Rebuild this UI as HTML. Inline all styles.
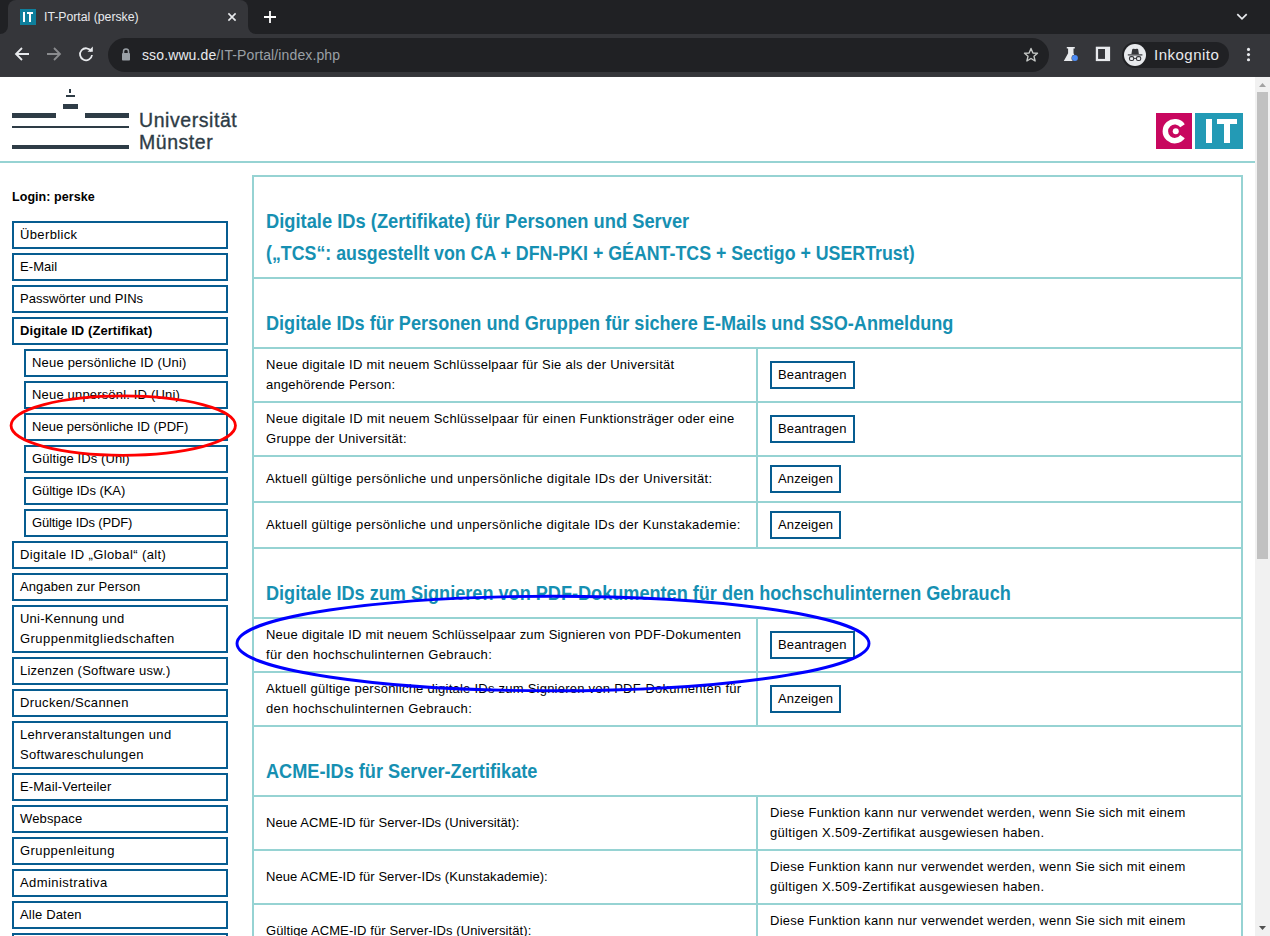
<!DOCTYPE html>
<html><head><meta charset="utf-8">
<style>
html,body{margin:0;padding:0;}
body{width:1270px;height:936px;overflow:hidden;position:relative;background:#fff;font-family:"Liberation Sans",sans-serif;}
.a{position:absolute;}
/* chrome */
#strip{left:0;top:0;width:1270px;height:34px;background:#202124;}
#tab{left:8px;top:0;width:240px;height:34px;background:#35363a;border-radius:8px 8px 0 0;}
#tb{left:0;top:34px;width:1270px;height:42px;background:#35363a;}
#tbline{left:0;top:76px;width:1270px;height:1px;background:#38393d;}
#omni{left:108px;top:38px;width:941px;height:34px;background:#202124;border-radius:17px;}
.ct{color:#e8eaed;white-space:nowrap;}
/* page */
#page{left:0;top:77px;width:1255px;height:859px;background:#fff;overflow:hidden;}
.nav{position:absolute;border:2px solid #065c90;padding:2px 0 2px 6px;box-sizing:border-box;font-size:13px;line-height:20px;color:#000;white-space:nowrap;}

.h{position:absolute;left:266px;font-size:20.6px;line-height:32px;font-weight:bold;color:#1690b2;white-space:nowrap;transform-origin:0 0;}
.hl{position:absolute;background:#96d3d3;}
.t{position:absolute;font-size:13px;line-height:20px;color:#000;white-space:nowrap;}
.btn{position:absolute;left:770px;height:28px;border:2px solid #065c90;box-sizing:border-box;font-size:13px;line-height:24px;padding:0 6px;color:#000;white-space:nowrap;}
</style></head>
<body>
<div class="a" id="strip"></div>
<div class="a" id="tab"></div>
<div class="a" id="tb"></div>
<div class="a" id="tbline"></div>
<div class="a" id="omni"></div>

<!-- tab contents -->
<div class="a" style="left:0;top:26px;width:8px;height:8px;background:#35363a"></div>
<div class="a" style="left:0;top:0;width:8px;height:34px;background:#202124;border-radius:0 0 8px 0"></div>
<div class="a" style="left:248px;top:26px;width:8px;height:8px;background:#35363a"></div>
<div class="a" style="left:248px;top:0;width:8px;height:34px;background:#202124;border-radius:0 0 0 8px"></div>
<div class="a" style="left:20px;top:9px;width:16px;height:16px;background:#0e7f9c"></div>
<div class="a" style="left:23px;top:12px;width:2px;height:10px;background:#fff"></div><div class="a" style="left:27px;top:12px;width:6px;height:2px;background:#fff"></div><div class="a" style="left:29px;top:12px;width:2px;height:10px;background:#fff"></div>
<div class="a ct" style="left:44px;top:8.8px;font-size:12.3px;line-height:17px;letter-spacing:-0.02px">IT-Portal (perske)</div>
<svg class="a" style="left:226px;top:11px" width="12" height="12" viewBox="0 0 12 12"><path d="M2.4 2.4L9.6 9.6M9.6 2.4L2.4 9.6" stroke="#e8eaed" stroke-width="1.6"/></svg>
<svg class="a" style="left:262px;top:9px" width="16" height="16" viewBox="0 0 16 16"><path d="M8 2V14M2 8H14" stroke="#fff" stroke-width="1.8"/></svg>
<svg class="a" style="left:1235px;top:10px" width="14" height="12" viewBox="0 0 14 12"><path d="M2.3 4.2L7 8.9L11.7 4.2" fill="none" stroke="#e8eaed" stroke-width="1.7"/></svg>
<!-- toolbar icons -->
<svg class="a" style="left:13px;top:45px" width="18" height="18" viewBox="0 0 18 18"><path d="M16 9H3M9 3L3 9L9 15" fill="none" stroke="#e8eaed" stroke-width="1.8"/></svg>
<svg class="a" style="left:45px;top:45px" width="18" height="18" viewBox="0 0 18 18"><path d="M2 9H15M9 3L15 9L9 15" fill="none" stroke="#8a8b8e" stroke-width="1.8"/></svg>
<svg class="a" style="left:77px;top:45px" width="18" height="18" viewBox="0 0 18 18"><path d="M14.2 6.2A6 6 0 1 0 15 10" fill="none" stroke="#e8eaed" stroke-width="1.8"/><path d="M10.5 6.8H15.8V1.5Z" fill="#e8eaed"/></svg>
<svg class="a" style="left:120px;top:47px" width="12" height="15" viewBox="0 0 12 15"><path d="M3.5 6V4.5A2.5 2.5 0 0 1 8.5 4.5V6" fill="none" stroke="#9aa0a6" stroke-width="1.5"/><rect x="2" y="6" width="8" height="7.5" fill="#9aa0a6" rx="0.8"/></svg>
<div class="a ct" style="left:142px;top:46px;font-size:14px;line-height:17px;letter-spacing:0.12px;top:46.7px"><span style="color:#e8eaed">sso.wwu.de</span><span style="color:#9aa0a6">/IT-Portal/index.php</span></div>
<svg class="a" style="left:1023px;top:47px" width="16" height="16" viewBox="0 0 16 16"><path d="M8 1.5L9.9 6L14.5 6.3L11 9.3L12.1 14L8 11.5L3.9 14L5 9.3L1.5 6.3L6.1 6Z" fill="none" stroke="#c4c7c5" stroke-width="1.4" stroke-linejoin="round"/></svg>
<svg class="a" style="left:1062px;top:46px" width="18" height="18" viewBox="0 0 18 18"><path d="M4.8 1.1H12.8V2.6H11.5V7.2L15.2 14.9H1.8L6.1 7.2V2.6H4.8Z" fill="#e8eaed"/><circle cx="12.9" cy="12.1" r="3.4" fill="#35363a"/><circle cx="12.9" cy="12.1" r="3" fill="#4c8bf5"/></svg>
<svg class="a" style="left:1095px;top:46px" width="16" height="16" viewBox="0 0 16 16"><rect x="0.8" y="0.7" width="14.3" height="14.4" fill="#e8eaed"/><rect x="3.1" y="3" width="6.9" height="9.9" fill="#35363a"/></svg>
<div class="a" style="left:1122px;top:42px;width:107px;height:26px;border-radius:13px;background:#202124"></div>
<div class="a" style="left:1124px;top:44px;width:22px;height:22px;border-radius:11px;background:#e8eaed"></div>
<svg class="a" style="left:1124px;top:44px" width="22" height="22" viewBox="0 0 22 22"><path d="M7.4 10.2L8.2 5.6Q8.4 4.5 9.5 4.7L11.2 5.1L12.9 4.7Q14 4.5 14.2 5.6L14.9 10.2Z" fill="#35363a"/><rect x="3.8" y="10.3" width="14.6" height="1.2" fill="#35363a"/><rect x="5.5" y="12.6" width="4.2" height="3.9" rx="1.5" fill="none" stroke="#35363a" stroke-width="1.1"/><rect x="12.5" y="12.6" width="4.2" height="3.9" rx="1.5" fill="none" stroke="#35363a" stroke-width="1.1"/><path d="M9.7 14.4H12.5" stroke="#35363a" stroke-width="1"/></svg>
<div class="a ct" style="left:1154px;top:46px;font-size:15px;line-height:17px;letter-spacing:0.5px">Inkognito</div>
<svg class="a" style="left:1244px;top:46px" width="9" height="18" viewBox="0 0 9 18"><circle cx="4.5" cy="3.4" r="1.55" fill="#e8eaed"/><circle cx="4.5" cy="8.6" r="1.55" fill="#e8eaed"/><circle cx="4.5" cy="13.7" r="1.55" fill="#e8eaed"/></svg>


<!-- SCROLLBAR -->
<div class="a" style="left:1255px;top:77px;width:15px;height:859px;background:#f1f1f1"></div>
<div class="a" style="left:1257px;top:92px;width:11px;height:467px;background:#c1c1c1"></div>

<!-- LOGO -->
<div class="a" style="left:12px;top:113px;width:44px;height:5px;background:#2e3c46"></div>
<div class="a" style="left:85px;top:113px;width:44px;height:5px;background:#2e3c46"></div>
<div class="a" style="left:12px;top:126px;width:117px;height:2px;background:#2e3c46"></div>
<div class="a" style="left:12px;top:145px;width:117px;height:4px;background:#2e3c46"></div>
<div class="a" style="left:63px;top:104px;width:15px;height:5px;background:#2e3c46"></div>
<div class="a" style="left:66px;top:95px;width:9px;height:2px;background:#2e3c46"></div>
<div class="a" style="left:69px;top:89px;width:2px;height:4px;background:#2e3c46"></div>

<!-- teal header line -->
<div class="a" style="left:0;top:161px;width:1255px;height:2px;background:#96d3d3"></div>


<svg class="a" style="left:1255px;top:77px" width="15" height="15" viewBox="0 0 15 15"><path d="M4 10H11L7.5 6Z" fill="#a3a3a3"/></svg>
<svg class="a" style="left:1255px;top:921px" width="15" height="15" viewBox="0 0 15 15"><path d="M4 5H11L7.5 9Z" fill="#505050"/></svg>
<div class="a" style="left:139px;top:109.4px;font-size:19.5px;line-height:22px;color:#2e3c46;-webkit-text-stroke:0.35px #2e3c46;white-space:nowrap;letter-spacing:0.561px">Universität</div>
<div class="a" style="left:139px;top:131.1px;font-size:19.5px;line-height:22px;color:#2e3c46;-webkit-text-stroke:0.35px #2e3c46;white-space:nowrap;letter-spacing:0.542px">Münster</div>
<div class="a" style="left:1156px;top:113px;width:36px;height:36px;background:#c8075f"></div>
<div class="a" style="left:1195px;top:113px;width:48px;height:36px;background:#239ab5"></div>
<svg class="a" style="left:1156px;top:113px" width="36" height="36" viewBox="0 0 36 36"><path d="M26.54 12.78A9.45 9.45 0 1 0 26.54 23.62" fill="none" stroke="#fff" stroke-width="5.5"/><circle cx="19.75" cy="18.2" r="3" fill="#fff"/></svg>
<div class="a" style="left:1206px;top:119.3px;width:5.7px;height:23.7px;background:#fff"></div>
<div class="a" style="left:1217px;top:119.3px;width:20px;height:4.4px;background:#fff"></div>
<div class="a" style="left:1224px;top:119.3px;width:5.9px;height:23.7px;background:#fff"></div>
<div class="a" style="left:12px;top:186.8px;font-size:12.5px;line-height:20px;font-weight:bold;color:#000;white-space:nowrap;letter-spacing:0.058px">Login: perske</div>
<div class="nav" style="left:12px;top:221px;width:216px;height:28px"><span style="letter-spacing:0.365px">Überblick</span></div>
<div class="nav" style="left:12px;top:253px;width:216px;height:28px"><span style="letter-spacing:0.071px">E-Mail</span></div>
<div class="nav" style="left:12px;top:285px;width:216px;height:28px"><span style="letter-spacing:0.055px">Passwörter und PINs</span></div>
<div class="nav" style="left:12px;top:317px;width:216px;height:28px;font-weight:bold"><span style="letter-spacing:0.069px">Digitale ID (Zertifikat)</span></div>
<div class="nav" style="left:24px;top:349px;width:204px;height:28px"><span style="letter-spacing:0.199px">Neue persönliche ID (Uni)</span></div>
<div class="nav" style="left:24px;top:381px;width:204px;height:28px"><span style="letter-spacing:0.176px">Neue unpersönl. ID (Uni)</span></div>
<div class="nav" style="left:24px;top:413px;width:204px;height:28px"><span style="letter-spacing:0.011px">Neue persönliche ID (PDF)</span></div>
<div class="nav" style="left:24px;top:445px;width:204px;height:28px"><span style="letter-spacing:0.097px">Gültige IDs (Uni)</span></div>
<div class="nav" style="left:24px;top:477px;width:204px;height:28px"><span style="letter-spacing:-0.039px">Gültige IDs (KA)</span></div>
<div class="nav" style="left:24px;top:509px;width:204px;height:28px"><span style="letter-spacing:-0.140px">Gültige IDs (PDF)</span></div>
<div class="nav" style="left:12px;top:541px;width:216px;height:28px"><span style="letter-spacing:0.405px">Digitale ID „Global“ (alt)</span></div>
<div class="nav" style="left:12px;top:573px;width:216px;height:28px"><span style="letter-spacing:0.100px">Angaben zur Person</span></div>
<div class="nav" style="left:12px;top:605px;width:216px;height:48px"><span style="letter-spacing:0.210px">Uni-Kennung und</span><br><span style="letter-spacing:0.445px">Gruppenmitgliedschaften</span></div>
<div class="nav" style="left:12px;top:657px;width:216px;height:28px"><span style="letter-spacing:0.217px">Lizenzen (Software usw.)</span></div>
<div class="nav" style="left:12px;top:689px;width:216px;height:28px"><span style="letter-spacing:0.364px">Drucken/Scannen</span></div>
<div class="nav" style="left:12px;top:721px;width:216px;height:48px"><span style="letter-spacing:0.332px">Lehrveranstaltungen und</span><br><span style="letter-spacing:0.331px">Softwareschulungen</span></div>
<div class="nav" style="left:12px;top:773px;width:216px;height:28px"><span style="letter-spacing:0.165px">E-Mail-Verteiler</span></div>
<div class="nav" style="left:12px;top:805px;width:216px;height:28px"><span style="letter-spacing:0.135px">Webspace</span></div>
<div class="nav" style="left:12px;top:837px;width:216px;height:28px"><span style="letter-spacing:0.425px">Gruppenleitung</span></div>
<div class="nav" style="left:12px;top:869px;width:216px;height:28px"><span style="letter-spacing:0.423px">Administrativa</span></div>
<div class="nav" style="left:12px;top:901px;width:216px;height:28px"><span style="letter-spacing:0.172px">Alle Daten</span></div>
<div class="nav" style="left:12px;top:933px;width:216px;height:28px"></div>
<div class="hl" style="left:252px;top:175px;width:991px;height:2px"></div>
<div class="hl" style="left:252px;top:277px;width:991px;height:2px"></div>
<div class="hl" style="left:252px;top:347px;width:991px;height:2px"></div>
<div class="hl" style="left:252px;top:401px;width:991px;height:2px"></div>
<div class="hl" style="left:252px;top:455px;width:991px;height:2px"></div>
<div class="hl" style="left:252px;top:501px;width:991px;height:2px"></div>
<div class="hl" style="left:252px;top:547px;width:991px;height:2px"></div>
<div class="hl" style="left:252px;top:617px;width:991px;height:2px"></div>
<div class="hl" style="left:252px;top:671px;width:991px;height:2px"></div>
<div class="hl" style="left:252px;top:725px;width:991px;height:2px"></div>
<div class="hl" style="left:252px;top:795px;width:991px;height:2px"></div>
<div class="hl" style="left:252px;top:849px;width:991px;height:2px"></div>
<div class="hl" style="left:252px;top:903px;width:991px;height:2px"></div>
<div class="hl" style="left:252px;top:175px;width:2px;height:761px"></div>
<div class="hl" style="left:1241px;top:175px;width:2px;height:761px"></div>
<div class="hl" style="left:756px;top:347px;width:2px;height:200px"></div>
<div class="hl" style="left:756px;top:617px;width:2px;height:108px"></div>
<div class="hl" style="left:756px;top:795px;width:2px;height:141px"></div>
<div class="h" style="top:205px;transform:scaleX(0.8890)">Digitale IDs (Zertifikate) für Personen und Server</div>
<div class="h" style="top:237px;transform:scaleX(0.8636)">(„TCS“: ausgestellt von CA + DFN-PKI + GÉANT-TCS + Sectigo + USERTrust)</div>
<div class="h" style="top:307px;transform:scaleX(0.8796)">Digitale IDs für Personen und Gruppen für sichere E-Mails und SSO-Anmeldung</div>
<div class="h" style="top:577px;transform:scaleX(0.8796)">Digitale IDs zum Signieren von PDF-Dokumenten für den hochschulinternen Gebrauch</div>
<div class="h" style="top:755px;transform:scaleX(0.8816)">ACME-IDs für Server-Zertifikate</div>
<div class="t" style="left:266px;top:355px"><span style="letter-spacing:0.257px">Neue digitale ID mit neuem Schlüsselpaar für Sie als der Universität</span><br><span style="letter-spacing:0.221px">angehörende Person:</span></div>
<div class="btn" style="top:361px;letter-spacing:0.134px">Beantragen</div>
<div class="t" style="left:266px;top:409px"><span style="letter-spacing:0.269px">Neue digitale ID mit neuem Schlüsselpaar für einen Funktionsträger oder eine</span><br><span style="letter-spacing:0.278px">Gruppe der Universität:</span></div>
<div class="btn" style="top:415px;letter-spacing:0.134px">Beantragen</div>
<div class="t" style="left:266px;top:469px"><span style="letter-spacing:0.355px">Aktuell gültige persönliche und unpersönliche digitale IDs der Universität:</span></div>
<div class="btn" style="top:465px;letter-spacing:0.117px">Anzeigen</div>
<div class="t" style="left:266px;top:515px"><span style="letter-spacing:0.347px">Aktuell gültige persönliche und unpersönliche digitale IDs der Kunstakademie:</span></div>
<div class="btn" style="top:511px;letter-spacing:0.117px">Anzeigen</div>
<div class="t" style="left:266px;top:625px"><span style="letter-spacing:0.195px">Neue digitale ID mit neuem Schlüsselpaar zum Signieren von PDF-Dokumenten</span><br><span style="letter-spacing:0.350px">für den hochschulinternen Gebrauch:</span></div>
<div class="btn" style="top:631px;letter-spacing:0.134px">Beantragen</div>
<div class="t" style="left:266px;top:679px"><span style="letter-spacing:0.242px">Aktuell gültige persönliche digitale IDs zum Signieren von PDF-Dokumenten für</span><br><span style="letter-spacing:0.356px">den hochschulinternen Gebrauch:</span></div>
<div class="btn" style="top:685px;letter-spacing:0.117px">Anzeigen</div>
<div class="t" style="left:266px;top:813px"><span style="letter-spacing:0.067px">Neue ACME-ID für Server-IDs (Universität):</span></div>
<div class="t" style="left:770px;top:803px"><span style="letter-spacing:0.269px">Diese Funktion kann nur verwendet werden, wenn Sie sich mit einem</span><br><span style="letter-spacing:0.322px">gültigen X.509-Zertifikat ausgewiesen haben.</span></div>
<div class="t" style="left:266px;top:867px"><span style="letter-spacing:0.066px">Neue ACME-ID für Server-IDs (Kunstakademie):</span></div>
<div class="t" style="left:770px;top:857px"><span style="letter-spacing:0.269px">Diese Funktion kann nur verwendet werden, wenn Sie sich mit einem</span><br><span style="letter-spacing:0.322px">gültigen X.509-Zertifikat ausgewiesen haben.</span></div>
<div class="t" style="left:266px;top:921px"><span style="letter-spacing:0.103px">Gültige ACME-ID für Server-IDs (Universität):</span></div>
<div class="t" style="left:770px;top:911px"><span style="letter-spacing:0.269px">Diese Funktion kann nur verwendet werden, wenn Sie sich mit einem</span><br><span style="letter-spacing:0.322px">gültigen X.509-Zertifikat ausgewiesen haben.</span></div>
<svg class="a" style="left:0;top:0" width="1270" height="936" viewBox="0 0 1270 936">
<ellipse cx="123.25" cy="425.6" rx="112.2" ry="29.7" fill="none" stroke="#ff0000" stroke-width="2.8"/>
<ellipse cx="553" cy="643.5" rx="316" ry="47.3" fill="none" stroke="#0000ff" stroke-width="2.9"/>
</svg>
</body></html>
